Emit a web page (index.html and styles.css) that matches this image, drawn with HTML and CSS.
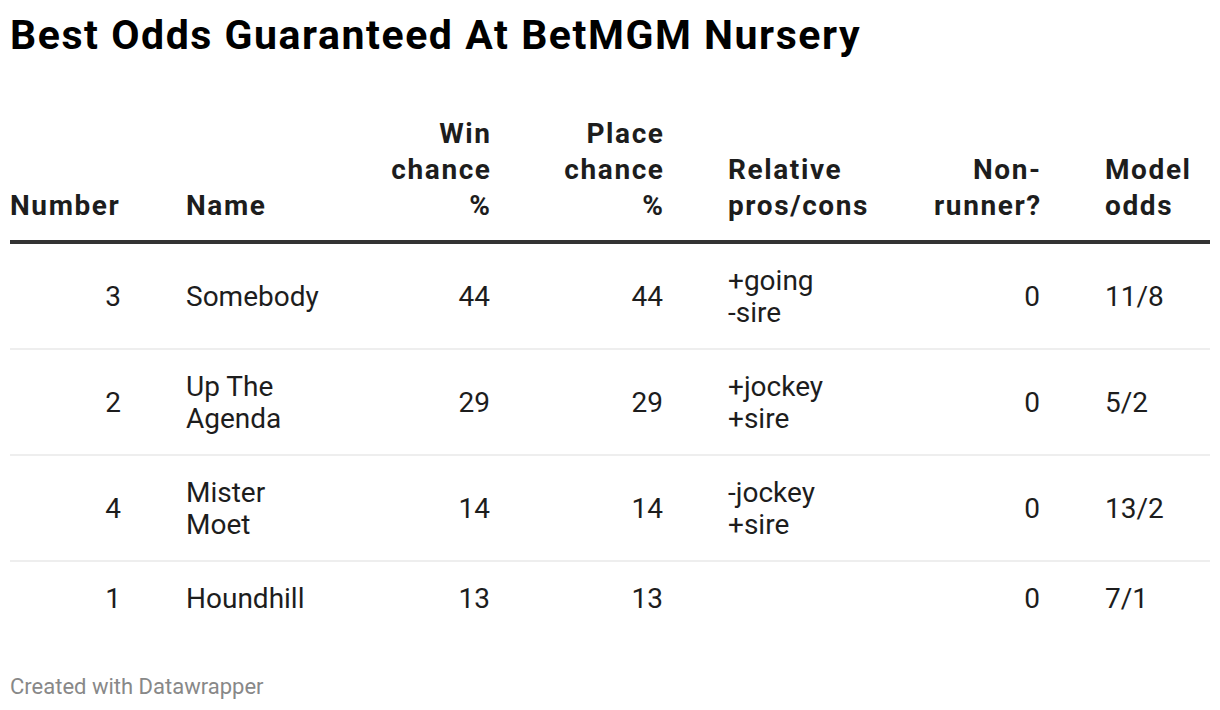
FILE: index.html
```html
<!DOCTYPE html>
<html>
<head>
<meta charset="utf-8">
<link rel="stylesheet" href="styles.css">
</head>
<body>
<div class="chart">
  <h1 class="title">Best Odds Guaranteed At BetMGM Nursery</h1>
  <div class="table">
    <div class="row head">
      <div class="c num">Number</div>
      <div class="c">Name</div>
      <div class="c r">Win chance %</div>
      <div class="c r">Place chance %</div>
      <div class="c">Relative pros/cons</div>
      <div class="c r">Non-runner?</div>
      <div class="c">Model odds</div>
    </div>
    <div class="row">
      <div class="c r">3</div>
      <div class="c">Somebody</div>
      <div class="c r">44</div>
      <div class="c r">44</div>
      <div class="c">+going<br>-sire</div>
      <div class="c r">0</div>
      <div class="c">11/8</div>
    </div>
    <div class="row">
      <div class="c r">2</div>
      <div class="c">Up The Agenda</div>
      <div class="c r">29</div>
      <div class="c r">29</div>
      <div class="c">+jockey<br>+sire</div>
      <div class="c r">0</div>
      <div class="c">5/2</div>
    </div>
    <div class="row">
      <div class="c r">4</div>
      <div class="c">Mister Moet</div>
      <div class="c r">14</div>
      <div class="c r">14</div>
      <div class="c">-jockey<br>+sire</div>
      <div class="c r">0</div>
      <div class="c">13/2</div>
    </div>
    <div class="row last">
      <div class="c r">1</div>
      <div class="c">Houndhill</div>
      <div class="c r">13</div>
      <div class="c r">13</div>
      <div class="c"></div>
      <div class="c r">0</div>
      <div class="c">7/1</div>
    </div>
  </div>
  <div class="footer">Created with Datawrapper</div>
</div>
</body>
</html>
```
FILE: styles.css
```css
html, body {
  margin: 0;
  padding: 0;
  background: #fff;
}
body {
  font-family: Roboto, "Liberation Sans", sans-serif;
  color: #1d1d1d;
}
.chart {
  padding: 0 10px;
}
.title {
  margin: 0;
  padding-top: 11px;
  font-size: 41px;
  line-height: 48px;
  font-weight: 700;
  letter-spacing: 1.55px;
  color: #000;
}
.table {
  margin-top: 57px;
}
.row {
  display: grid;
  grid-template-columns: 111px 140px 99px 108px 147px 100px 105px;
  column-gap: 65px;
  align-items: center;
  padding: 21px 0 19px;
  border-bottom: 2px solid #eeeeee;
  font-size: 28px;
  line-height: 32px;
}
.row.head {
  align-items: end;
  padding: 0 0 16px;
  border-bottom: 4px solid #333333;
  font-weight: 700;
  letter-spacing: 1.6px;
  line-height: 36px;
}
.row.last {
  border-bottom: none;
}
.c.r {
  text-align: right;
}
.head .c.r {
  margin-right: -1.6px;
  margin-left: -6px;
}
.head .c.num {
  text-align: left;
}
.footer {
  margin-top: 40px;
  font-size: 22px;
  line-height: 26px;
  color: #888888;
}
```
